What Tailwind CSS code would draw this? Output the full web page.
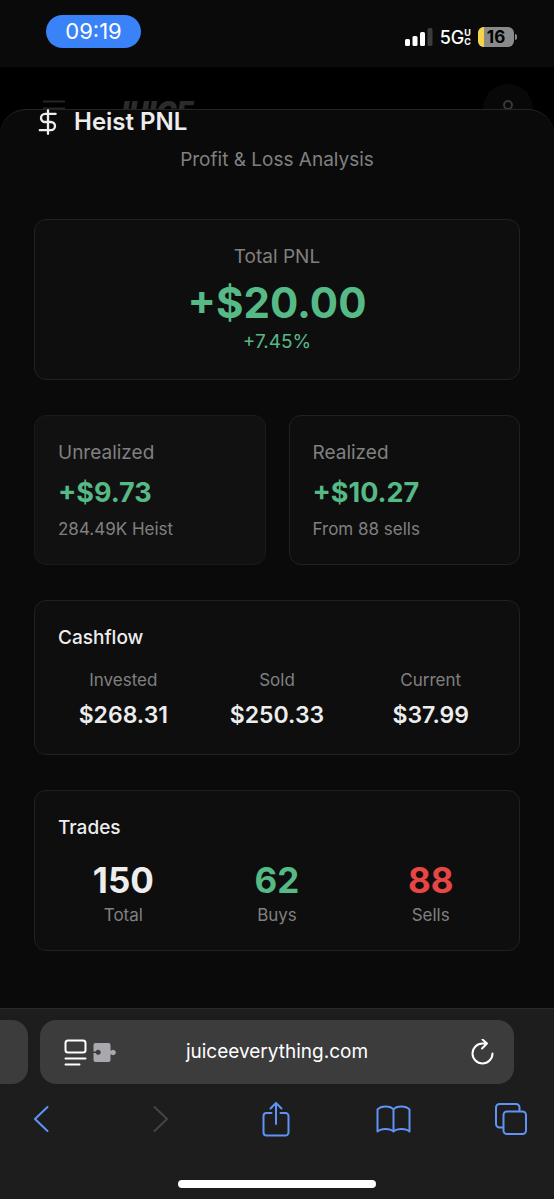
<!DOCTYPE html>
<html lang="en">
<head>
    <meta charset="UTF-8">
    <meta name="viewport" content="width=device-width, initial-scale=1.0">
    <title>Heist PNL</title>
    <script src="https://cdn.jsdelivr.net/npm/@tailwindcss/browser@4"></script>
</head>
<body class="min-h-screen flex flex-col bg-black text-[#ededed] font-['Inter','Liberation_Sans',sans-serif]">

    <!-- Status bar -->
    <div class="h-[67px] shrink-0 flex items-start justify-between bg-[#0a0a0a] pt-[15px] pl-[46px] pr-[37px]">
        <div class="w-[95px] h-[33px] rounded-full bg-[#3a82f7] flex items-center justify-center text-[22px] text-white">09:19</div>
        <div class="flex items-center h-5 mt-3 text-white">
            <svg class="w-7 h-[18px]" viewBox="0 0 28 18" fill="#fff">
                <rect x="0" y="11" width="5" height="7" rx="1.5"/>
                <rect x="7.5" y="8" width="5" height="10" rx="1.5"/>
                <rect x="15" y="4" width="5" height="14" rx="1.5"/>
                <rect x="22.5" y="0" width="5" height="18" rx="1.5" fill="#3b3b3b"/>
            </svg>
            <span class="ml-[7px] text-[18px] font-medium">5G</span>
            <span class="flex flex-col text-[9px] leading-[9px] font-bold"><span>U</span><span>C</span></span>
            <div class="ml-[7px] w-9 h-5 rounded-md overflow-hidden bg-[#8a8a8a] flex items-center justify-center text-[17px] leading-5 font-bold text-black relative">
                <span class="absolute left-0 inset-y-0 w-[6px] bg-[#f5d547]"></span>
                <span class="relative">16</span>
            </div>
            <span class="ml-px w-[2px] h-[6px] rounded-r-full bg-[#8a8a8a]"></span>
        </div>
    </div>

    <!-- Dimmed site header -->
    <header class="h-[84px] shrink-0 flex items-center pl-[43px] pr-[21px]">
        <button aria-label="Menu">
            <svg class="w-[22px] h-[18px]" viewBox="0 0 22 18" stroke="#262626" stroke-width="2"><path d="M0 1.500h22M0 8.500h22M0 15.500h22"/></svg>
        </button>
        <span class="ml-12 pt-1 text-[27px] leading-none font-black italic text-[#2b2b2b]">JUICE</span>
        <button aria-label="Account" class="ml-auto w-[50px] h-[50px] rounded-full bg-[#080808] flex items-center justify-center">
            <svg class="w-6 h-6" viewBox="0 0 24 24" fill="none" stroke="#383838" stroke-width="2"><circle cx="12" cy="8" r="4"/><path d="M4 22c0-5 3-8 8-8s8 3 8 8"/></svg>
        </button>
    </header>

    <!-- PNL sheet -->
    <main class="relative flex-1 -mt-[42px] rounded-t-[26px] border-t border-[#242424] bg-[#0a0a0a] px-[34px] pb-[57px]">
        <div class="flex items-center gap-3 h-6">
            <svg class="w-7 h-7" viewBox="0 0 24 24" fill="none" stroke="#ededed" stroke-width="2" stroke-linecap="round" stroke-linejoin="round"><path d="M12 2v20M18.500 5H9.500a3.500 3.500 0 0 0 0 7h5a3.500 3.500 0 0 1 0 7H5"/></svg>
            <h1 class="text-[24px] leading-6 font-semibold">Heist PNL</h1>
        </div>
        <p class="mt-3 text-center text-[19px] leading-7 text-[#808080]">Profit &amp; Loss Analysis</p>

        <div class="mt-[45px] flex flex-col gap-[35px]">
            <section class="rounded-xl border border-[#212121] bg-[#0e0e0e] p-[23px] text-center">
                <h2 class="text-[19px] leading-7 text-[#808080]">Total PNL</h2>
                <p class="mt-2 text-[42px] leading-12 font-bold text-[#56ba86]">+$20.00</p>
                <p class="mt-px text-[19px] leading-7 text-[#56ba86]">+7.45%</p>
            </section>

            <div class="grid grid-cols-2 gap-[23px]">
                <section class="rounded-xl border border-[#1a1a1a] bg-[#111111] p-[23px]">
                    <h2 class="text-[19px] leading-7 text-[#808080]">Unrealized</h2>
                    <p class="mt-2 text-[27px] leading-9 font-bold text-[#56ba86]">+$9.73</p>
                    <p class="mt-[6px] text-[17px] leading-6 text-[#808080]">284.49K Heist</p>
                </section>
                <section class="rounded-xl border border-[#212121] bg-[#0e0e0e] p-[23px]">
                    <h2 class="text-[19px] leading-7 text-[#808080]">Realized</h2>
                    <p class="mt-2 text-[27px] leading-9 font-bold text-[#56ba86]">+$10.27</p>
                    <p class="mt-[6px] text-[17px] leading-6 text-[#808080]">From 88 sells</p>
                </section>
            </div>

            <section class="rounded-xl border border-[#212121] bg-[#0e0e0e] p-[23px]">
                <h2 class="text-[19px] leading-7 font-medium">Cashflow</h2>
                <dl class="mt-4 grid grid-cols-3 gap-[23px] text-center">
                    <div>
                        <dt class="text-[17px] leading-6 text-[#808080]">Invested</dt>
                        <dd class="mt-[7px] text-[23px] leading-8 font-semibold">$268.31</dd>
                    </div>
                    <div>
                        <dt class="text-[17px] leading-6 text-[#808080]">Sold</dt>
                        <dd class="mt-[7px] text-[23px] leading-8 font-semibold">$250.33</dd>
                    </div>
                    <div>
                        <dt class="text-[17px] leading-6 text-[#808080]">Current</dt>
                        <dd class="mt-[7px] text-[23px] leading-8 font-semibold">$37.99</dd>
                    </div>
                </dl>
            </section>

            <section class="rounded-xl border border-[#212121] bg-[#0e0e0e] p-[23px]">
                <h2 class="text-[19px] leading-7 font-medium">Trades</h2>
                <dl class="mt-[18px] grid grid-cols-3 gap-[23px] text-center">
                    <div class="flex flex-col-reverse gap-[3px]">
                        <dt class="text-[17px] leading-6 text-[#808080]">Total</dt>
                        <dd class="text-[35px] leading-10 font-bold">150</dd>
                    </div>
                    <div class="flex flex-col-reverse gap-[3px]">
                        <dt class="text-[17px] leading-6 text-[#808080]">Buys</dt>
                        <dd class="text-[35px] leading-10 font-bold text-[#56ba86]">62</dd>
                    </div>
                    <div class="flex flex-col-reverse gap-[3px]">
                        <dt class="text-[17px] leading-6 text-[#808080]">Sells</dt>
                        <dd class="text-[35px] leading-10 font-bold text-[#e84545]">88</dd>
                    </div>
                </dl>
            </section>
        </div>
    </main>

    <!-- Browser toolbar -->
    <footer class="shrink-0 border-t border-[#2a2a2a] bg-[#1d1d1d] pt-[11px] pb-[11px]">
        <div class="flex gap-3">
            <div class="w-7 h-16 rounded-r-2xl bg-[#3c3c3c]"></div>
            <div class="flex-1 mr-10 h-16 rounded-2xl bg-[#3c3c3c] flex items-center">
                <div class="w-20 pl-6 flex items-center gap-[6px]">
                    <button aria-label="Page settings">
                        <svg class="w-[23px] h-[27px]" viewBox="0 0 23 27" fill="none" stroke="#fff" stroke-width="2" stroke-linecap="round"><rect x="1.500" y="1.500" width="20" height="12" rx="2.500"/><path d="M1.500 19.500h20M1.500 25.500h14"/></svg>
                    </button>
                    <button aria-label="Extensions">
                        <svg class="w-[23px] h-[19px]" viewBox="0 0 23 19"><path fill="#a9a8ae" d="M2.500 0h13a2 2 0 0 1 2 2v5.500h1a2.600 2.600 0 1 1 0 4h-1V17a2 2 0 0 1-2 2h-13a2 2 0 0 1-2-2v-7h2.200a2.600 2.600 0 1 0 0-1.500H.500V2a2 2 0 0 1 2-2z"/></svg>
                    </button>
                </div>
                <input type="text" aria-label="Address" value="juiceeverything.com" class="flex-1 min-w-0 bg-transparent text-center text-[19px] text-white outline-none">
                <div class="w-20 pr-5 flex justify-end">
                    <button aria-label="Reload">
                        <svg class="w-[23px] h-[27px]" viewBox="0 0 23 27" fill="none" stroke="#fff" stroke-width="2" stroke-linecap="round" stroke-linejoin="round"><path d="M21.500 14.500A10 10 0 1 1 11.500 4.500h4.500M11.500 0.500l4.500 4-5 5"/></svg>
                    </button>
                </div>
            </div>
        </div>
        <nav class="mt-[17px] h-9 flex items-center justify-between pl-[23px] pr-[25px] text-[#5f93f5]">
            <button aria-label="Back" class="w-9 flex justify-center">
                <svg class="w-4 h-7" viewBox="0 0 16 28" fill="none" stroke="currentColor" stroke-width="2" stroke-linecap="round" stroke-linejoin="round"><path d="M14.500 2L2 14l12.500 12"/></svg>
            </button>
            <button aria-label="Forward" class="w-9 flex justify-end pr-2 text-[#454545]">
                <svg class="w-4 h-7" viewBox="0 0 16 28" fill="none" stroke="currentColor" stroke-width="2" stroke-linecap="round" stroke-linejoin="round"><path d="M1.500 2L14 14 1.500 26"/></svg>
            </button>
            <button aria-label="Share" class="w-9 flex justify-center">
                <svg class="w-7 h-9" viewBox="0 0 28 36" fill="none" stroke="currentColor" stroke-width="2" stroke-linecap="round" stroke-linejoin="round"><path d="M9.500 12H4.500a3 3 0 0 0-3 3v16.500a3 3 0 0 0 3 3h19a3 3 0 0 0 3-3V15a3 3 0 0 0-3-3h-5M14 23V2M8.500 7.500L14 2l5.500 5.500"/></svg>
            </button>
            <button aria-label="Bookmarks" class="w-9 flex justify-center">
                <svg class="w-[35px] h-7" viewBox="0 0 35 28" fill="none" stroke="currentColor" stroke-width="2" stroke-linejoin="round"><path d="M17.500 4.500C14.500.500 5 .500 1.500 4.500v22c3.500-3.500 12.500-3.500 16 0 3.500-3.500 12.500-3.500 16 0v-22c-3.500-4-13-4-16 0zv22"/></svg>
            </button>
            <button aria-label="Tabs" class="w-9 flex justify-center">
                <svg class="w-8 h-8" viewBox="0 0 32 32" fill="none" stroke="currentColor" stroke-width="2" stroke-linejoin="round"><rect x="8.500" y="8.500" width="22.500" height="22.500" rx="3.500"/><path d="M8 24.500H4.500A3.500 3.500 0 0 1 1 21V4.500A3.500 3.500 0 0 1 4.500 1H21a3.500 3.500 0 0 1 3.500 3.500V8"/></svg>
            </button>
        </nav>
        <div class="mt-[43px] mx-auto w-[198px] h-2 rounded-full bg-white"></div>
    </footer>

</body>
</html>
